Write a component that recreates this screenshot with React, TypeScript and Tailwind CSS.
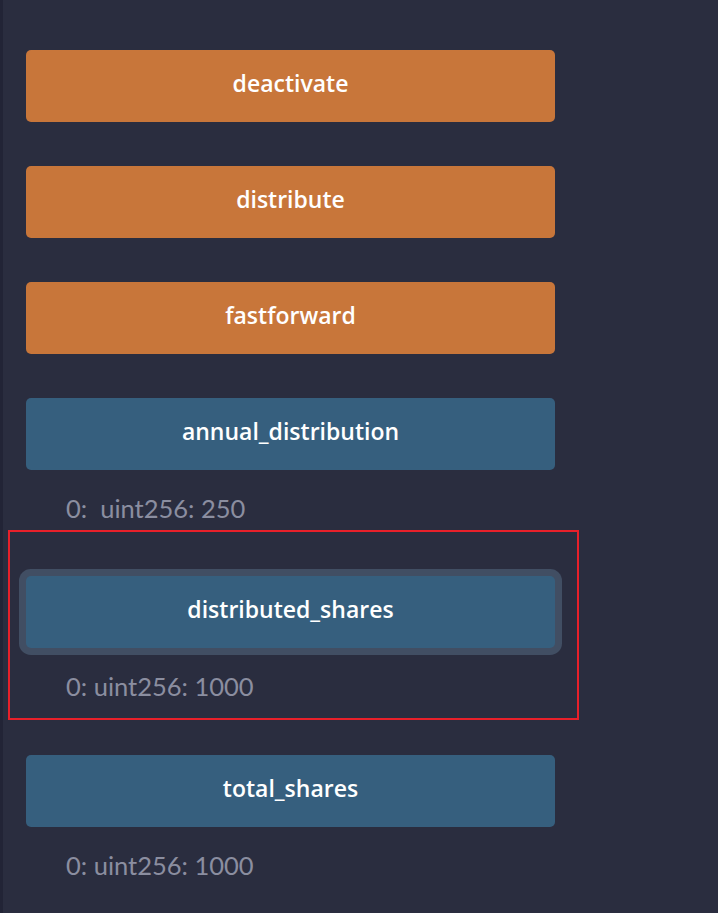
import React from 'react';

type Fn = {
  name: string;
  kind: 'write' | 'read';
  output?: string;
  focused?: boolean;
};

const FUNCTIONS: Fn[] = [
  { name: 'deactivate', kind: 'write' },
  { name: 'distribute', kind: 'write' },
  { name: 'fastforward', kind: 'write' },
  { name: 'annual_distribution', kind: 'read', output: '0:  uint256: 250' },
  { name: 'distributed_shares', kind: 'read', output: '0: uint256: 1000', focused: true },
  { name: 'total_shares', kind: 'read', output: '0: uint256: 1000' },
];

function FnButton({ fn }: { fn: Fn }) {
  const color = fn.kind === 'write' ? 'bg-[#c8763a]' : 'bg-[#365f7e]';
  const ring = fn.focused ? 'ring-[7px] ring-[#414e63]' : '';
  return (
    <button
      type="button"
      className={`w-[529px] h-[72px] pb-[5px] rounded-[5px] ${color} ${ring} text-white text-[23px] font-semibold flex items-center justify-center`}
      style={{ fontFamily: '"Open Sans", Lato, sans-serif' }}
    >
      {fn.name}
    </button>
  );
}

export default function App() {
  return (
    <div
      className="w-[718px] h-[913px] bg-[#2a2d3f] flex overflow-hidden"
      style={{ fontFamily: 'Lato, "Open Sans", sans-serif' }}
    >
      {/* left edge strip */}
      <div className="w-[3px] shrink-0 bg-[#222436]" />

      <div className="flex flex-col pl-[23px] pt-[50px] gap-[44px]">
        {FUNCTIONS.map((fn) => (
          <div
            key={fn.name}
            className={`relative flex flex-col ${fn.output ? (fn.focused ? 'pb-[9px]' : 'pb-[8px]') : ''}`}
          >
            <FnButton fn={fn} />
            {fn.output && (
              <div className="mt-[22px] pl-[40px] h-[32px] flex items-center text-[25.5px] leading-[32px] text-[#8b8ea0] whitespace-pre">
                {fn.output}
              </div>
            )}
            {fn.focused && (
              <div className="absolute left-[-18px] top-[-46px] w-[571px] h-[190px] border-2 border-[#e8202a] pointer-events-none" />
            )}
          </div>
        ))}
      </div>
    </div>
  );
}
